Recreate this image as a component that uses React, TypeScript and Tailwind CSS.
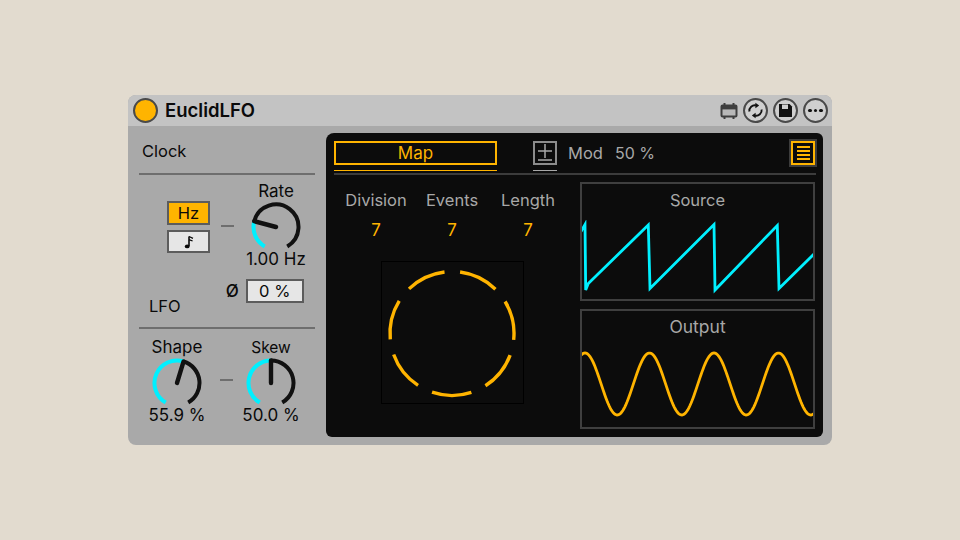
import React from 'react';

const font = { fontFamily: 'Inter, "Noto Sans", sans-serif' };

// angle in degrees, 0 at the top, clockwise
const polar = (cx: number, cy: number, r: number, a: number) => {
  const t = (a * Math.PI) / 180;
  return [cx + r * Math.sin(t), cy - r * Math.cos(t)];
};

const arc = (cx: number, cy: number, r: number, from: number, to: number) => {
  const [x1, y1] = polar(cx, cy, r, from);
  const [x2, y2] = polar(cx, cy, r, to);
  const large = to - from > 180 ? 1 : 0;
  return `M${x1.toFixed(2)} ${y1.toFixed(2)}A${r} ${r} 0 ${large} 1 ${x2.toFixed(2)} ${y2.toFixed(2)}`;
};

const Knob: React.FC<{ angle: number }> = ({ angle }) => {
  const [nx, ny] = polar(25, 25, 22.5, angle);
  return (
    <svg width="50" height="50" viewBox="0 0 50 50" fill="none" className="block">
      <path d={arc(25, 25, 22.5, -150, angle)} stroke="#00f0ff" strokeWidth="4" />
      <path d={arc(25, 25, 22.5, angle, 150)} stroke="#111111" strokeWidth="4" />
      <path d={`M25 25L${nx.toFixed(2)} ${ny.toFixed(2)}`} stroke="#111111" strokeWidth="4.4" strokeLinecap="round" />
    </svg>
  );
};

const Dash = () => <div className="w-[13px] h-[2px] bg-[#6e6e6e]" />;

const NoteIcon = () => (
  <svg width="10" height="14" viewBox="0 0 10 14" fill="none">
    <ellipse cx="3.2" cy="11.4" rx="2.4" ry="1.9" fill="#0a0a0a" />
    <path d="M5 11V1.5" stroke="#0a0a0a" strokeWidth="1.6" />
    <path d="M5 1.5L9 3.4M5 4.6L8.6 6" stroke="#0a0a0a" strokeWidth="1.3" />
  </svg>
);

const KnobBlock: React.FC<{ label: string; value: string; angle: number; labelSize?: string }> = ({
  label,
  value,
  angle,
  labelSize = 'text-[17px]',
}) => (
  <div className="flex flex-col items-center w-[70px]">
    <div className={`${labelSize} leading-[21px] text-[#0a0a0a]`}>{label}</div>
    <Knob angle={angle} />
    <div className="text-[17px] leading-[14px] text-[#0a0a0a] whitespace-nowrap">{value}</div>
  </div>
);

const TitleIcons = () => (
  <div className="flex items-center ml-auto mr-[4px]">
    <svg width="18" height="18" viewBox="0 0 18 18" className="mr-[5px]">
      <rect x="1.5" y="3.5" width="15" height="11" rx="1" fill="#b8b8b8" stroke="#3f3f3f" strokeWidth="2" />
      <rect x="1.5" y="3" width="15" height="4.4" fill="#3f3f3f" />
      <path d="M4.5 1v3M13.5 1v3M4.5 14v3M13.5 14v3" stroke="#3f3f3f" strokeWidth="2" />
    </svg>
    <div className="w-[25px] h-[25px] rounded-full border-2 border-[#4a4a4a] bg-[#cfcfcf] flex items-center justify-center">
      <svg width="17" height="17" viewBox="0 0 17 17" fill="none">
        <path d="M2.4 9.5C1.8 5.6 5.4 2.6 9 3.4" stroke="#111111" strokeWidth="1.9" />
        <path d="M14.6 7.5C15.2 11.4 11.6 14.4 8 13.6" stroke="#111111" strokeWidth="1.9" />
        <path d="M8.4 0.8L12.2 3.6L8.4 6.2Z" fill="#111111" />
        <path d="M8.6 16.2L4.8 13.4L8.6 10.8Z" fill="#111111" />
      </svg>
    </div>
    <div className="ml-[5px] w-[25px] h-[25px] rounded-full border-2 border-[#4a4a4a] bg-[#cfcfcf] flex items-center justify-center">
      <svg width="15" height="15" viewBox="0 0 15 15">
        <path d="M1 1H11.5L14 3.5V14H1Z" fill="#111111" />
        <rect x="4" y="1.5" width="6" height="4.5" fill="#cfcfcf" />
      </svg>
    </div>
    <div className="ml-[5px] w-[25px] h-[25px] rounded-full border-2 border-[#4a4a4a] bg-[#cfcfcf] flex items-center justify-center gap-[2px]">
      <div className="w-[3.5px] h-[3.5px] rounded-full bg-[#111111]" />
      <div className="w-[3.5px] h-[3.5px] rounded-full bg-[#111111]" />
      <div className="w-[3.5px] h-[3.5px] rounded-full bg-[#111111]" />
    </div>
  </div>
);

const LeftColumn = () => (
  <div className="w-[198px] flex flex-col text-[#0a0a0a]">
    <div className="pl-[14px] h-[47px] pt-[15px] text-[16.5px] leading-[20px]">Clock</div>
    <div className="ml-[11px] w-[176px] h-[2px] bg-[#6e6e6e]" />
    <div className="flex items-start pl-[39px] mt-[6px]">
      <div className="mt-[20px] flex flex-col gap-[5px]">
        <div className="w-[43px] h-[24px] bg-[#ffb400] border-2 border-[#5c5c5c] flex items-center justify-center text-[16.5px] leading-none">Hz</div>
        <div className="w-[43px] h-[23px] bg-[#e6e6e6] border-2 border-[#5c5c5c] flex items-center justify-center">
          <NoteIcon />
        </div>
      </div>
      <div className="mt-[44px] ml-[11px]"><Dash /></div>
      <div className="ml-[7px]">
        <KnobBlock label="Rate" value="1.00 Hz" angle={-75} />
      </div>
    </div>
    <div className="flex items-start pl-[21px] mt-[13px] h-[48px]">
      <div className="mt-[17px] text-[16.5px] leading-[20px]">LFO</div>
      <div className="ml-[45px] flex items-center">
        <div className="text-[17px] leading-[24px] font-medium">Ø</div>
        <div className="ml-[7px] w-[58px] h-[24px] bg-[#e6e6e6] border-2 border-[#5c5c5c] flex items-center justify-center text-[16.5px] leading-none">0 %</div>
      </div>
    </div>
    <div className="ml-[11px] w-[176px] h-[2px] bg-[#6e6e6e]" />
    <div className="flex items-start pl-[14px] mt-[8px]">
      <KnobBlock label="Shape" value="55.9 %" angle={17} />
      <div className="mt-[42px] ml-[8px]"><Dash /></div>
      <div className="ml-[3px]">
        <KnobBlock label="Skew" value="50.0 %" angle={0} labelSize="text-[15.5px]" />
      </div>
    </div>
  </div>
);

// one dash per event, 7 of 7 active
const EuclidRing = () => (
  <svg width="143" height="143" viewBox="0 0 143 143" fill="none" className="block">
    <rect x="0.5" y="0.5" width="142" height="142" stroke="#000000" />
    {[0, 1, 2, 3, 4, 5, 6].map((i) => {
      const start = 7.5 + i * (360 / 7);
      return <path key={i} d={arc(71, 72.5, 62, start, start + 37)} stroke="#ffb400" strokeWidth="3.4" />;
    })}
  </svg>
);

const SourceWave = () => (
  <svg width="231" height="79" viewBox="1 0 231 79" fill="none" className="block">
    <path
      d="M0 11.5L4 4.5L4.7 70L7.3 63.5L67.3 5L69 68.5L133 4.5L134 70L196.3 5.5L198 68.5L233 34"
      stroke="#00f0ff"
      strokeWidth="2.8"
    />
  </svg>
);

const outputPath = () => {
  const pts: string[] = [];
  for (let x = 0; x <= 233; x += 1) {
    const y = 37 - 31 * Math.cos((2 * Math.PI * (x - 4)) / 64.5);
    pts.push(`${x === 0 ? 'M' : 'L'}${x} ${y.toFixed(2)}`);
  }
  return pts.join('');
};

const OutputWave = () => (
  <svg width="231" height="72" viewBox="1 0 231 72" fill="none" className="block">
    <path d={outputPath()} stroke="#ffb400" strokeWidth="2.8" />
  </svg>
);

const ScopeBox: React.FC<{ title: string; h: string; titleSize: string; children: React.ReactNode }> = ({
  title,
  h,
  titleSize,
  children,
}) => (
  <div className={`w-[235px] border-2 border-[#3f3f3f] flex flex-col ${h}`}>
    <div className={`text-center ${titleSize} leading-[20px] text-[#a8a8a8] pt-[6px] h-[36px]`}>{title}</div>
    {children}
  </div>
);

const Panel = () => (
  <div className="w-[497px] h-[304px] mt-[7px] rounded-tl-[8px] rounded-tr-[6px] rounded-br-[6px] rounded-bl-[6px] bg-[#0c0c0c] flex flex-col">
    <div className="flex items-start h-[40px] pt-[8px] pl-[8px] pr-[6px]">
      <div className="w-[163px]">
        <div className="h-[24px] border-2 border-[#ffb400] flex items-center justify-center text-[17px] leading-none text-[#ffb400]">Map</div>
        <div className="mt-[5px] h-px bg-[#ffb400]" />
      </div>
      <div className="ml-[36px] w-[24px]">
        <div className="h-[24px] border-2 border-[#8c8c8c]">
          <svg width="20" height="20" viewBox="0 0 20 20" fill="none" className="block">
            <path d="M10 1V15M3 8H17M3 17H17" stroke="#a8a8a8" strokeWidth="1.5" />
          </svg>
        </div>
        <div className="mt-[5px] h-px bg-[#a8a8a8]" />
      </div>
      <div className="ml-[11px] h-[24px] flex items-center text-[16.5px] leading-none text-[#a8a8a8]">Mod</div>
      <div className="ml-[12px] h-[24px] flex items-center text-[16px] leading-none text-[#a8a8a8]">50 %</div>
      <div className="ml-auto -mt-[2px] w-[28px] h-[28px] border-2 border-[#3c3c3c]">
        <div className="w-full h-full border-2 border-[#ffb400] flex flex-col items-center justify-center gap-[2px]">
          <div className="w-[13px] h-[2px] bg-[#ffb400]" />
          <div className="w-[13px] h-[2px] bg-[#ffb400]" />
          <div className="w-[13px] h-[2px] bg-[#ffb400]" />
          <div className="w-[13px] h-[2px] bg-[#ffb400]" />
        </div>
      </div>
    </div>
    <div className="mx-[8px] w-[482px] h-[2px] bg-[#3c3c3c]" />
    <div className="flex">
      <div className="w-[254px] flex flex-col">
        <div className="ml-[12px] mt-[15px] grid grid-cols-[76px_76px_76px] text-center text-[16.5px] leading-[20px] text-[#a8a8a8]">
          <div>Division</div>
          <div>Events</div>
          <div>Length</div>
        </div>
        <div className="ml-[12px] mt-[10px] grid grid-cols-[76px_76px_76px] text-center text-[17px] leading-[20px] text-[#ffb400]">
          <div>7</div>
          <div>7</div>
          <div>7</div>
        </div>
        <div className="ml-[55px] mt-[21px]">
          <EuclidRing />
        </div>
      </div>
      <div className="pt-[7px] flex flex-col gap-[8px]">
        <ScopeBox title="Source" h="h-[119px]" titleSize="text-[16.5px]">
          <SourceWave />
        </ScopeBox>
        <ScopeBox title="Output" h="h-[120px]" titleSize="text-[17.5px]">
          <OutputWave />
        </ScopeBox>
      </div>
    </div>
  </div>
);

export default function App() {
  return (
    <div className="w-screen h-screen bg-[#e2dbcf] flex items-center justify-center" style={font}>
      <div className="w-[704px] h-[350px] rounded-[8px] overflow-hidden bg-[#a9a9a9] flex flex-col">
        <div className="h-[31px] bg-[#c3c3c3] flex items-center pl-[5px]">
          <div className="w-[25px] h-[25px] rounded-full bg-[#ffb400] border-2 border-[#4a4a4a]" />
          <div className="ml-[7px] text-[18.5px] leading-none font-semibold text-[#0a0a0a]">EuclidLFO</div>
          <TitleIcons />
        </div>
        <div className="flex">
          <LeftColumn />
          <Panel />
        </div>
      </div>
    </div>
  );
}
